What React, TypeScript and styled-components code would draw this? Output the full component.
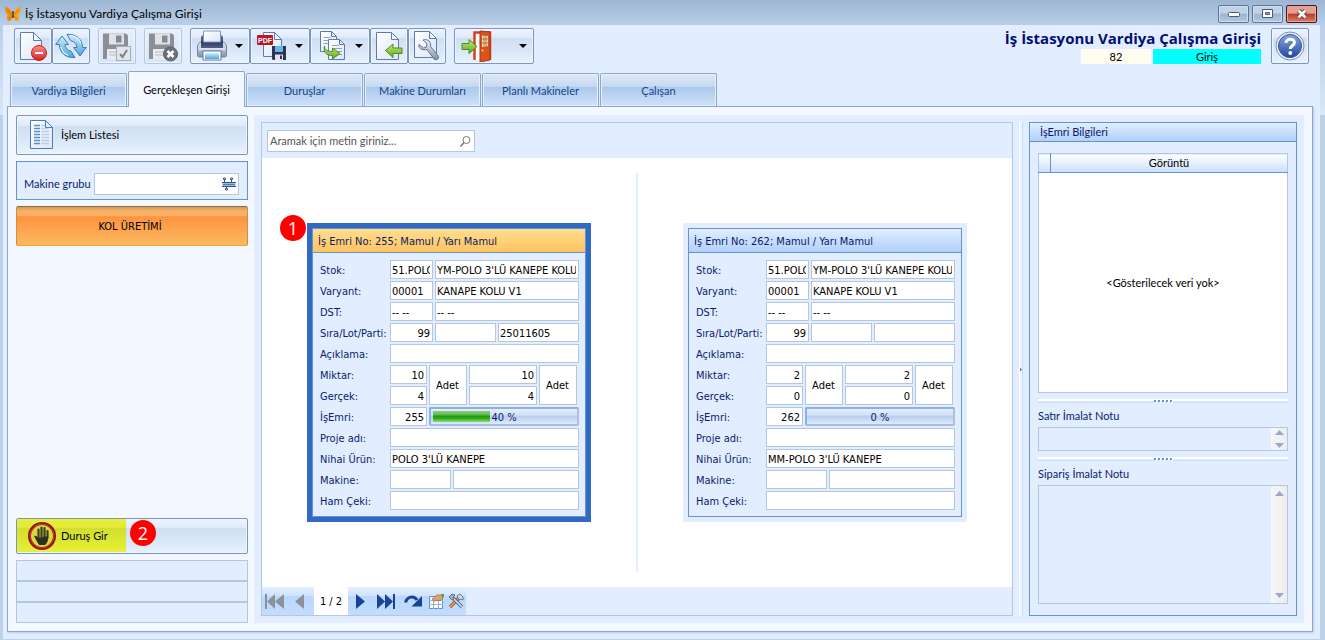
import React from "react";
import styled, { createGlobalStyle, css } from "styled-components";

const navy = "#0a1a6b";
const line = "#b3c7e3";
const panelBlue = "#6593cf";
const pale = "#e2eeff";
const valueFont = `"DejaVu Sans Condensed", "Noto Sans", sans-serif`;

const Global = createGlobalStyle`
  * { box-sizing: border-box; }
  body {
    margin: 0;
    font-family: Lato, "Noto Sans", sans-serif;
    font-size: 11px;
    line-height: 14px;
    color: #000;
  }
  button, input, textarea { font: inherit; color: inherit; margin: 0; }
`;

const Frame = styled.div`
  min-height: 100vh;
  display: flex;
  flex-direction: column;
  padding: 0 5px 1px 3px;
  background: linear-gradient(#9cb5d2 0, #b9cfe8 25px, #d9e7f6 115px, #bad2ea 115px);
`;

const TitleBar = styled.header`
  height: 25px;
  display: flex;
  align-items: center;
  gap: 4px;
  padding: 2px 3px 0 2px;
  font-size: 12px;
  line-height: 16px;
`;

const TitleText = styled.span`
  flex: 1;
`;

const WindowButtons = styled.div`
  display: flex;
  gap: 3px;
`;

const WindowButton = styled.button<{ $close?: boolean }>`
  width: 31px;
  height: 18px;
  padding: 0;
  display: flex;
  align-items: center;
  justify-content: center;
  border: 1px solid ${(p) => (p.$close ? "#4d1420" : "#5d7492")};
  border-radius: 2px;
  box-shadow: inset 0 0 0 1px ${(p) => (p.$close ? "#e3a79c" : "#cfdff0")};
  background: ${(p) =>
    p.$close
      ? "linear-gradient(#e3a093 0 45%, #bb3b22 50%, #d8806a)"
      : "linear-gradient(#bfd2e8 0 45%, #9bb4d2 50%, #b5cae2)"};
`;

const Client = styled.div`
  flex: 1;
  display: flex;
  flex-direction: column;
  background: ${pale};
  padding: 3px 7px 7px 4px;
`;

const Toolbar = styled.div`
  display: flex;
  align-items: flex-start;
  gap: 8px;
  height: 43px;
  padding: 0 4px 0 7px;
`;

const ToolGroup = styled.div`
  display: flex;
`;

const glossy = css`
  border: 1px solid #7a96bf;
  border-radius: 2px;
  box-shadow: inset 0 0 0 1px #eef5ff;
  background: linear-gradient(#edf4ff 0, #e0ebfa 25%, #cfdff2 28%, #d9e6f6 60%, #e9f2fe);
`;

const ToolButton = styled.button<{ $wide?: number }>`
  ${glossy}
  width: ${(p) => p.$wide ?? 38}px;
  height: 36px;
  padding: 0 6px 0 ${(p) => (p.$wide ? 5 : 2)}px;
  display: flex;
  align-items: center;
  justify-content: space-between;
  &:disabled {
    border-color: #b4c6de;
    background: linear-gradient(#e6f0fe, #d8e5f6);
  }
  svg { flex: none; }
`;

const Heading = styled.div`
  flex: 1;
  display: flex;
  flex-direction: column;
  align-items: flex-end;
  padding-right: 2px;
`;

const HeadingTitle = styled.h1`
  margin: 0;
  font: bold 15px/21px "Open Sans", "Noto Sans", sans-serif;
  color: #000f73;
`;

const StatusRow = styled.div`
  display: flex;
  gap: 2px;
  text-align: center;
  line-height: 15px;
`;

const StatusBox = styled.span<{ $cyan?: boolean }>`
  width: ${(p) => (p.$cyan ? 108 : 70)}px;
  height: 15px;
  background: ${(p) => (p.$cyan ? "#00ffff" : "#fffbef")};
`;

const Tabs = styled.div`
  display: flex;
  align-items: flex-end;
  gap: 1px;
  height: 35px;
  padding-left: 3px;
`;

const Tab = styled.button<{ $active?: boolean }>`
  width: 117px;
  height: 33px;
  padding: 1px 0 0;
  border: 1px solid #8ba6cf;
  border-bottom: 0;
  border-radius: 2px 2px 0 0;
  box-shadow: inset 0 0 0 1px #e6f0ff;
  background: linear-gradient(#dde8f6 0, #c8daf1 38%, #abc8ec 42%, #cfe2fb);
  color: #15428b;
  ${(p) =>
    p.$active &&
    css`
      height: 36px;
      margin-bottom: -1px;
      color: #000;
      background: #f3f7ff;
      box-shadow: none;
      z-index: 1;
    `}
`;

const Page = styled.main`
  flex: 1;
  display: flex;
  gap: 6px;
  padding: 8px;
  border: 1px solid #8ba6cf;
  box-shadow: 1px 1px 2px #b9cbe6;
  background: #f3f7ff;
`;

const Side = styled.aside`
  width: 232px;
  flex: none;
  display: flex;
  flex-direction: column;
  gap: 6px;
`;

const SideButton = styled.button<{ $orange?: boolean }>`
  ${glossy}
  height: 40px;
  padding: 0 9px;
  display: flex;
  align-items: center;
  gap: 3px;
  ${(p) =>
    p.$orange &&
    css`
      justify-content: center;
      padding: 2px 12px 0 8px;
      font-family: ${valueFont};
      border-color: #8e6b3e #c99143 #f5a81c;
      box-shadow: none;
      background: linear-gradient(#c99a60 0, #f9b062 10%, #fdb064 22%, #fc9440 26%, #fdb862);
    `}
`;

const StopWrap = styled.div`
  position: relative;
  margin-top: auto;
`;

const StopButton = styled.button`
  ${glossy}
  width: 100%;
  height: 36px;
  padding: 0;
  display: flex;
`;

const StopFace = styled.span`
  height: 33px;
  width: 109px;
  padding-left: 9px;
  display: flex;
  align-items: center;
  gap: 3px;
  background: linear-gradient(#e9f03a 0, #e3ea38 25%, #d2de2e 28%, #e8f036);
`;

const MachineGroup = styled.div`
  display: flex;
  align-items: center;
  height: 39px;
  padding: 6px 8px 0 7px;
  border: 1px solid ${panelBlue};
  background: ${pale};
  color: ${navy};
  label { width: 70px; }
`;

const IconField = styled.div<{ $w?: number }>`
  ${(p) => (p.$w ? css`width: ${p.$w}px;` : css`flex: 1;`)}
  min-width: 0;
  height: 22px;
  display: flex;
  align-items: center;
  padding: 0 2px;
  border: 1px solid ${line};
  background: #fff;
  input {
    flex: 1;
    min-width: 0;
    border: 0;
    outline: 0;
    padding: 0;
    background: none;
  }
  input::placeholder { color: #555; opacity: 1; }
`;

const SlotList = styled.div`
  border: 1px solid ${line};
  background: ${pale};
`;

const Slot = styled.div`
  height: 19px;
  & + & { border-top: 2px solid ${line}; height: 21px; }
`;

const Work = styled.div`
  flex: 1;
  min-width: 0;
  display: flex;
  gap: 6px;
  padding: 7px;
  background: ${pale};
`;

const ListPanel = styled.section`
  flex: 1;
  min-width: 0;
  display: flex;
  flex-direction: column;
  border: 1px solid ${line};
`;

const SearchStrip = styled.div`
  height: 35px;
  padding: 7px 5px;
`;

const Cards = styled.div`
  flex: 1;
  display: flex;
  padding: 15px 0;
  background: #fff;
`;

const CardCell = styled.div`
  flex: 1;
  display: flex;
  align-items: center;
  justify-content: center;
  & + & { border-left: 2px solid ${pale}; }
`;

const Card = styled.article<{ $selected?: boolean }>`
  position: relative;
  width: 284px;
  padding: 5px;
  font-family: ${valueFont};
  background: ${(p) => (p.$selected ? "#316ac5" : pale)};
`;

const CardFrame = styled.div`
  border: 1px solid ${panelBlue};
  background: ${pale};
  color: ${navy};
`;

const CardTitle = styled.h2<{ $selected?: boolean }>`
  margin: 0;
  height: 24px;
  padding: 0 5px;
  font-size: 11px;
  font-weight: normal;
  line-height: 25px;
  border-bottom: 1px solid ${panelBlue};
  background: ${(p) =>
    p.$selected ? "linear-gradient(#ffde8f, #ffc35e)" : "linear-gradient(#e2eeff, #b0d0fb)"};
`;

const CardBody = styled.div`
  display: flex;
  flex-direction: column;
  gap: 2px;
  padding: 7px 6px 6px 7px;
`;

const Row = styled.div`
  display: flex;
  gap: 2px;
`;

const RowLabel = styled.label`
  width: 68px;
  flex: none;
  line-height: 21px;
  height: 19px;
  white-space: nowrap;
`;

const Box = styled.input<{ $w?: number; $right?: boolean }>`
  ${(p) => (p.$w ? css`width: ${p.$w}px; flex: none;` : css`flex: 1;`)}
  min-width: 0;
  height: 19px;
  padding: 1px 2px 0 1px;
  border: 1px solid ${line};
  outline: 0;
  background: #fff;
  color: #000;
  font-family: ${valueFont};
  text-align: ${(p) => (p.$right ? "right" : "left")};
`;

const Quantities = styled.div`
  display: grid;
  grid-template-columns: 68px 37px 38px 68px 38px;
  grid-template-rows: 19px 19px;
  gap: 2px;
  ${Box} { width: auto; }
`;

const UnitBox = styled(Box)`
  grid-row: span 2;
  height: 40px;
  text-align: center;
`;

const Bar = styled.div`
  position: relative;
  flex: 1;
  height: 19px;
  padding: 2px;
  border: 2px solid #8fb0db;
  border-color: #8fb0db #a5c0e4 #a5c0e4 #8fb0db;
  border-radius: 2px;
  background: linear-gradient(#e3edfb 0, #d2e1f6 40%, #b8cfef 50%, #dfeafa);
`;

const BarFill = styled.div`
  height: 11px;
  background: linear-gradient(#8ccf7e 0, #5dbb4b 35%, #1d9c10 45%, #2ba51a 65%, #8fe06c);
`;

const BarText = styled.span`
  position: absolute;
  inset: 0;
  text-align: center;
  line-height: 17px;
`;

const Badge = styled.span<{ $x: number; $y: number }>`
  position: absolute;
  left: ${(p) => p.$x}px;
  top: ${(p) => p.$y}px;
  width: 26px;
  height: 26px;
  border-radius: 50%;
  background: #f00;
  color: #fff;
  font: 18px/26px "Open Sans", "Noto Sans", sans-serif;
  text-align: center;
`;

const Navigator = styled.nav`
  height: 28px;
  display: flex;
`;

const NavPart = styled.div<{ $plain?: boolean; $pad?: boolean }>`
  display: flex;
  align-items: center;
  padding-right: ${(p) => (p.$pad ? 2 : 0)}px;
  background: ${(p) =>
    p.$plain ? "#fff" : "linear-gradient(#e4effd 0, #cfe2ff 32%, #bbd7ff 34%, #c3dcff)"};
`;

const PageCount = styled.span`
  width: 34px;
  padding-top: 1px;
  text-align: center;
  font-family: ${valueFont};
`;

const NavButton = styled.button<{ $w: number }>`
  width: ${(p) => p.$w}px;
  height: 28px;
  padding: 0;
  border: 0;
  background: none;
  display: flex;
  align-items: center;
  justify-content: center;
`;

const SideSplitter = styled.div`
  width: 4px;
  display: flex;
  align-items: center;
  border-left: 1px solid #fff;
  border-right: 1px solid #c6dcfb;
  background: #edf4ff;
`;

const Info = styled.section`
  width: 268px;
  flex: none;
  display: flex;
  flex-direction: column;
  border: 1px solid ${panelBlue};
  color: ${navy};
`;

const InfoTitle = styled.h2`
  margin: 0;
  height: 19px;
  padding: 0 10px;
  font-size: 11px;
  font-weight: normal;
  line-height: 17px;
  border-bottom: 1px solid ${panelBlue};
  background: linear-gradient(#e2eeff, #b0d0fb);
`;

const InfoBody = styled.div`
  flex: 1;
  display: flex;
  flex-direction: column;
  padding: 11px 8px;
`;

const DataTable = styled.table`
  height: 240px;
  width: 100%;
  table-layout: fixed;
  border-collapse: collapse;
  border: 1px solid ${line};
  background: #fff;
  color: #000;
  th {
    height: 19px;
    padding: 0;
    font-weight: normal;
    color: #000;
    border-bottom: 1px solid ${panelBlue};
    background: linear-gradient(#fff, #c8dffd);
  }
  th:first-child { width: 12px; border-right: 1px solid ${panelBlue}; }
  td { text-align: center; padding: 0; }
`;

const Splitter = styled.div`
  height: 4px;
  margin: 6px 0;
  display: flex;
  justify-content: center;
  border-top: 2px solid #fff;
  border-bottom: 1px solid #c6dcfb;
  svg { margin-top: -1px; flex: none; }
`;

const NoteLabel = styled.label`
  line-height: 14px;
  padding-bottom: 4px;
`;

const Note = styled.div<{ $grow?: boolean }>`
  display: flex;
  ${(p) => (p.$grow ? css`flex: 1;` : css`height: 24px;`)}
  border: 1px solid ${line};
  textarea {
    flex: 1;
    min-width: 0;
    border: 0;
    outline: 0;
    padding: 2px;
    resize: none;
    background: none;
    overflow: hidden;
  }
`;

const ScrollTrack = styled.div<{ $grow?: boolean }>`
  width: 16px;
  display: flex;
  flex-direction: column;
  align-items: center;
  justify-content: space-between;
  padding: ${(p) => (p.$grow ? 5 : 2)}px 0;
  background: linear-gradient(to right, #f7f7f7, #ececec);
`;

/* ---------- icons ---------- */

const Caret = () => (
  <svg width="8" height="4" viewBox="0 0 8 4"><path d="M0 0h8L4 4z" fill="#000" /></svg>
);

const Grads = () => (
  <svg width="0" height="0" style={{ position: "absolute" }} aria-hidden="true">
    <defs>
      <linearGradient id="paper" x1="0" y1="0" x2="1" y2="1">
        <stop offset="0" stopColor="#fff" /><stop offset="1" stopColor="#dce6f5" />
      </linearGradient>
      <linearGradient id="green" x1="0" y1="0" x2="0" y2="1">
        <stop offset="0" stopColor="#c5e86c" /><stop offset="1" stopColor="#5faa28" />
      </linearGradient>
      <linearGradient id="red" x1="0" y1="0" x2="0" y2="1">
        <stop offset="0" stopColor="#ff8e8e" /><stop offset="1" stopColor="#e01c1c" />
      </linearGradient>
      <linearGradient id="sky" x1="0" y1="0" x2="0" y2="1">
        <stop offset="0" stopColor="#d2ecfb" /><stop offset="1" stopColor="#4fa3dc" />
      </linearGradient>
      <linearGradient id="steel" x1="0" y1="0" x2="0" y2="1">
        <stop offset="0" stopColor="#f4f7fb" /><stop offset="1" stopColor="#7d90ae" />
      </linearGradient>
      <linearGradient id="royal" x1="0" y1="0" x2="0" y2="1">
        <stop offset="0" stopColor="#86a9e2" /><stop offset="1" stopColor="#2347a0" />
      </linearGradient>
      <linearGradient id="dark" x1="0" y1="0" x2="0" y2="1">
        <stop offset="0" stopColor="#6f7a98" /><stop offset=".6" stopColor="#2f3c63" /><stop offset="1" stopColor="#54628a" />
      </linearGradient>
    </defs>
  </svg>
);

const Sheet = ({ x, y, w, h, f = 7 }: { x: number; y: number; w: number; h: number; f?: number }) => (
  <g stroke="#5f7bae" strokeLinejoin="round">
    <path d={`M${x} ${y}h${w - f}l${f} ${f}v${h - f}h${-w}z`} fill="url(#paper)" />
    <path d={`M${x + w - f} ${y}v${f}h${f}z`} fill="#f5f9ff" />
  </g>
);

const Icon = ({ children, size = 32 }: { children: React.ReactNode; size?: number }) => (
  <svg width={size} height={size} viewBox={`0 0 ${size} ${size}`} aria-hidden="true">{children}</svg>
);

const DeleteDoc = () => (
  <Icon>
    <Sheet x={3.5} y={2.5} w={21} h={27} f={8} />
    <circle cx="22" cy="23" r="7.5" fill="url(#red)" stroke="#c61a1a" />
    <rect x="17.5" y="21.5" width="9" height="3" rx=".5" fill="#fff" stroke="#c61a1a" strokeWidth=".5" />
  </Icon>
);

const Refresh = () => (
  <Icon>
    <g fill="url(#sky)" stroke="#3b7fb8" strokeLinejoin="round">
      <path d="M.7 14.500L7 6l6.500 8.500H10c.3 3.500 2.500 6 6 6.600l4 6.400C11 28.500 4.500 22.500 4.300 14.500z" />
      <path d="M31.300 17.500L25 26l-6.500-8.500H22c-.3-3.500-2.500-6-6-6.600L12 4.500C21 3.500 27.500 9.500 27.700 17.500z" />
    </g>
    <path d="M15 6c5-.5 9.500 2.500 10.800 7.500M6 17c.8 4 3.500 7 7.500 8.200" fill="none" stroke="#e9f7ff" strokeWidth="1.200" />
  </Icon>
);

const GrayFloppy = ({ cancel }: { cancel?: boolean }) => (
  <Icon>
    <path d="M2 3.500h23l2 2V29H2z" fill="#8b8e94" />
    <path d="M8 3.500h15v11H8z" fill="#dfe2e7" />
    <path d="M15 5.500h5.500v7H15z" fill="#858990" />
    <path d="M6 19h17v10H6z" fill="#e9ecf0" />
    <path d="M8 22h12M8 25h12" stroke="#b9bdc4" />
    {cancel ? (
      <>
        <circle cx="23.500" cy="24" r="7" fill="#6e7278" stroke="#5d6167" />
        <path d="M20.500 21l6 6m0-6l-6 6" stroke="#fff" strokeWidth="2.500" />
      </>
    ) : (
      <>
        <rect x="15.500" y="16.500" width="14" height="14" fill="#e2e5e9" stroke="#a7abb2" />
        <path d="M19 24l2.500 3 4.500-7" fill="none" stroke="#7e838a" strokeWidth="2" />
      </>
    )}
  </Icon>
);

const Printer = () => (
  <Icon>
    <path d="M3 13l4-2h18l4 2 1.500 3v9.500c0 1-1 1.500-2 1.500H3.500c-1 0-2-.5-2-1.500V16z" fill="url(#steel)" stroke="#7587a8" />
    <path d="M5 8c0-2 1-3 3-3h16c2 0 3 1 3 3v10H5z" fill="url(#dark)" />
    <path d="M7.500 1h17v11h-17z" fill="url(#paper)" stroke="#8496ba" />
    <path d="M3 19h26" stroke="#fff" />
    <path d="M7 21h18v9H7z" fill="#fff" stroke="#5d78aa" />
    <path d="M9 23h14v6H9z" fill="url(#sky)" />
  </Icon>
);

const PdfSave = () => (
  <Icon>
    <Sheet x={7.500} y={2.500} w={18} h={24} />
    <rect x="1" y="5" width="16" height="10" rx="1" fill="#b8182a" />
    <text x="2" y="12.500" fontSize="7" fontWeight="bold" fontFamily="Liberation Sans, sans-serif" fill="#fff">PDF</text>
    <path d="M16 16h14v14H17l-1-1z" fill="#2b3550" />
    <path d="M19 16h8v6h-8z" fill="#6cb4e4" />
    <path d="M19 24.500h8V30h-8z" fill="#dfe5ee" />
    <path d="M24 25.500h2v3.500h-2z" fill="#2b3550" />
  </Icon>
);

const CopyPages = () => (
  <Icon>
    <Sheet x={4.500} y={1.500} w={16} h={20} f={5} />
    <path d="M7.500 7.500h7M7.500 10.500h6M7.500 13.500h6" stroke="#8fa3c8" />
    <Sheet x={12.500} y={9.500} w={16} h={20} f={5} />
    <path d="M16 15.500h7M16 18.500h10M16 21.500h10M16 24.500h10" stroke="#8fa3c8" />
    <path d="M8.500 16c0 4 3 5.500 8 5.500V18l7.500 5.500-7.500 5.500v-3.500C10 25.500 7 22 8.500 16z" fill="url(#green)" stroke="#4b8b26" />
  </Icon>
);

const BackPage = () => (
  <Icon>
    <Sheet x={3.500} y={2.500} w={22} h={27} f={7} />
    <path d="M12.500 20.500l7.500-6.500v4h9v5.500h-9v4z" fill="url(#green)" stroke="#4b8b26" strokeLinejoin="round" />
  </Icon>
);

const WrenchPage = () => (
  <Icon>
    <Sheet x={3.500} y={1.500} w={22} h={26} f={7} />
    <path d="M8 14.500l4.500 3.500 3-1 .5-3.500-4-3.500c5-1.500 8.500 2 7.500 6.500l7.500 9c2 3-1.500 5.500-4 3.500l-7-9.500C11 20.500 7 18.500 8 14.500z" fill="url(#steel)" stroke="#63728f" strokeLinejoin="round" />
  </Icon>
);

const ExitDoor = () => (
  <Icon>
    <path d="M14.500 30V2.500H30V30" fill="#f8fbff" stroke="#d1441c" strokeWidth="2.500" />
    <path d="M20 1l10 1v28l-10 2z" fill="#d9531f" stroke="#a9380f" />
    <path d="M22 5.500l6 .5v10l-6 1z" fill="#f3e4c4" />
    <path d="M24 5.500v11M26 5.500v11M22 9h6M22 13h6" stroke="#a55a2e" strokeWidth=".8" />
    <circle cx="22.500" cy="20.500" r="1" fill="#ffd970" />
    <path d="M2 13.500h7v-4l8 7-8 7v-4H2z" fill="url(#green)" stroke="#4b8b26" strokeLinejoin="round" />
  </Icon>
);

const Help = () => (
  <Icon>
    <circle cx="16" cy="16" r="14" fill="#e9eef7" stroke="#7d91b5" />
    <circle cx="16" cy="16" r="11.500" fill="url(#royal)" stroke="#34539c" />
    <path d="M12 13c0-5 8.500-5 8.500-.5 0 3-4.200 3-4.200 6.500" fill="none" stroke="#fff" strokeWidth="3" />
    <circle cx="16.300" cy="23" r="1.900" fill="#fff" />
  </Icon>
);

const Butterfly = () => (
  <svg width="16" height="16" viewBox="0 0 16 16" aria-hidden="true">
    <path d="M7.500 8.500C7 5 4 1 .3.500c-.5 4 .2 7.500 2.700 8.500-1.500 1.500-1.200 4.500.3 6 2.700.5 4-2 4.500-5z" fill="#f08c12" />
    <path d="M8.500 8.500C9 5 12 1 15.700.500c.5 4-.2 7.500-2.700 8.500 1.500 1.500 1.200 4.500-.3 6-2.700.5-4-2-4.500-5z" fill="#f6a21e" />
    <path d="M2 3l4 5M14 3l-4 5M4 13l3-3M12 13l-3-3" fill="none" stroke="#b5640f" strokeWidth=".6" />
    <path d="M8 5v7" stroke="#4a2a10" strokeWidth="1.400" />
  </svg>
);

const ListDoc = () => (
  <Icon>
    <g transform="translate(1 0)">
      <path d="M3.500 1.500h15l7 7v21h-22z" fill="url(#paper)" stroke="#4a7db5" />
      <path d="M18.500 1.500v7h7z" fill="#e7f1fb" stroke="#4a7db5" />
      <path d="M7 6.500h6M7 9.500h6M7 12.500h6M7 15.500h6M7 18.500h6M7 21.500h6M7 24.500h6" stroke="#5c8fc4" strokeWidth="1.500" />
      <path d="M14.500 6.500h3M14.500 9.500h8M14.500 12.500h8M14.500 15.500h8M14.500 18.500h8M14.500 21.500h8M14.500 24.500h8" stroke="#8aaed6" strokeWidth="1.500" strokeDasharray="1 1" />
    </g>
  </Icon>
);

const StopHand = () => (
  <Icon>
    <circle cx="16" cy="16" r="12.500" fill="#d8d840" stroke="#8d1410" strokeWidth="3" />
    <circle cx="16" cy="16" r="12" fill="none" stroke="#d9483a" strokeWidth=".8" />
    <path d="M12.500 18V9.500M15.500 17V7.500M18.500 17V8M21.500 18v-7" stroke="#3b3d24" strokeWidth="2.200" strokeLinecap="round" />
    <path d="M8 16c2-.8 3.500 1 4 2l9.500-2c1.500 3 0 7-2.500 9h-5.500c-2-1.500-3-5-5.500-9z" fill="#2e301f" />
  </Icon>
);

const MachineIcon = () => (
  <svg width="14" height="14" viewBox="0 0 14 14" aria-hidden="true">
    <path d="M2.500 2v4M9.500 2v4M4.500 9v3" stroke="#4b5568" />
    <path d="M1.500 1h2v1.500h-2zM8.500 1h2v1.500h-2zM3.500 11.500h2V13h-2z" fill="#fff" stroke="#4b5568" />
    <path d="M.5 5.500h13v4H.5z" fill="#8fc0ea" />
    <path d="M0 5.500h14M0 9.500h14" stroke="#33527f" />
    <path d="M1 7.500h12" stroke="#3f7ec0" />
  </svg>
);

const SearchIcon = () => (
  <svg width="13" height="13" viewBox="0 0 13 13" aria-hidden="true">
    <circle cx="7.500" cy="5" r="3.500" fill="#fff" stroke="#777" />
    <path d="M5 7.500L1.500 11.500" stroke="#777" strokeWidth="1.500" />
  </svg>
);

const First = () => (
  <svg width="19" height="15" viewBox="0 0 19 15"><path d="M0 0h2v15H0zM10 0v15L2 7.500zM19 0v15l-9-7.500z" fill="#8d9199" /></svg>
);
const Prev = () => (
  <svg width="9" height="15" viewBox="0 0 9 15"><path d="M9 0v15L0 7.500z" fill="#8d9199" /></svg>
);
const Next = () => (
  <svg width="9" height="15" viewBox="0 0 9 15"><path d="M0 0v15l9-7.500z" fill="#17458f" /></svg>
);
const Last = () => (
  <svg width="18" height="15" viewBox="0 0 18 15"><path d="M16 0h2v15h-2zM8 0v15l8-7.500zM0 0v15l8-7.500z" fill="#17458f" /></svg>
);
const Redo = () => (
  <svg width="18" height="14" viewBox="0 0 18 14">
    <path d="M1.500 8.500C3 2.500 10 1 13 6" fill="none" stroke="#17458f" strokeWidth="3" />
    <path d="M18 2v10.500H7.500z" fill="#17458f" />
  </svg>
);
const EditGrid = () => (
  <svg width="16" height="16" viewBox="0 0 16 16">
    <path d="M1.500 3.500h13v12h-13z" fill="#fff" stroke="#5b8fd0" />
    <path d="M1 7.500h14M1 11.500h14M5.500 7v9M10.500 7v9" stroke="#8db5e6" />
    <path d="M4 6l5-4h5l1.500 1.500-3 4H8l-2 1z" fill="#e0a070" stroke="#a8693a" strokeWidth=".7" />
    <path d="M13 1h3v3h-2z" fill="#4fa83d" />
  </svg>
);
const Tools = () => (
  <svg width="16" height="16" viewBox="0 0 16 16">
    <path d="M2 14L11 5" stroke="#a0521d" strokeWidth="3.200" />
    <path d="M2 14L11 5" stroke="#f0a352" strokeWidth="1.600" />
    <path d="M5 5l9 9" stroke="#4d6077" strokeWidth="3.200" />
    <path d="M5 5l9 9" stroke="#dbe5f0" strokeWidth="1.600" />
    <path d="M1 4l3-3 3 1-2 2 1 2-2 1z" fill="#9fb2c8" stroke="#4d6077" strokeWidth=".8" />
    <path d="M9 3l3-2 3 3v3l-2-1-2 1z" fill="#cfdae6" stroke="#4d6077" strokeWidth=".8" />
  </svg>
);
const ScrollTri = ({ down }: { down?: boolean }) => (
  <svg width="9" height="5" viewBox="0 0 9 5"><path d={down ? "M0 0h9L4.500 5z" : "M0 5h9L4.500 0z"} fill="#9ba7cb" /></svg>
);
const Grip = () => (
  <svg width="19" height="3" viewBox="0 0 19 3">
    {[0, 4, 8, 12, 16].map((x) => (
      <g key={x}>
        <path d={`M${x + 1} 1h2v2h-2z`} fill="#fff" />
        <path d={`M${x} 0h2v2h-2z`} fill="#6593cf" />
      </g>
    ))}
  </svg>
);

/* ---------- work order cards ---------- */

type Order = {
  id: string;
  selected?: boolean;
  lot: string;
  amount: string;
  done: string;
  percent: number;
  product: string;
};

const orders: Order[] = [
  { id: "255", selected: true, lot: "25011605", amount: "10", done: "4", percent: 40, product: "POLO 3'LÜ KANEPE" },
  { id: "262", lot: "", amount: "2", done: "0", percent: 0, product: "MM-POLO 3'LÜ KANEPE" },
];

type FieldSpec = { v?: string; w?: number; right?: boolean };

const Line = ({ id, label, fields }: { id: string; label: string; fields: FieldSpec[] }) => (
  <Row>
    <RowLabel htmlFor={id}>{label}</RowLabel>
    {fields.map((f, i) => (
      <Box
        key={i}
        id={i === 0 ? id : undefined}
        aria-label={i ? `${label} ${i + 1}` : undefined}
        readOnly
        value={f.v ?? ""}
        $w={f.w}
        $right={f.right}
      />
    ))}
  </Row>
);

const OrderCard = ({ o }: { o: Order }) => (
  <Card $selected={o.selected}>
    {o.selected && <Badge $x={-27} $y={-8}>1</Badge>}
    <CardFrame>
      <CardTitle $selected={o.selected}>İş Emri No: {o.id}; Mamul / Yarı Mamul</CardTitle>
      <CardBody>
        <Line id={`stok${o.id}`} label="Stok:" fields={[{ v: "51.POLO", w: 43 }, { v: "YM-POLO 3'LÜ KANEPE KOLU" }]} />
        <Line id={`var${o.id}`} label="Varyant:" fields={[{ v: "00001", w: 43 }, { v: "KANAPE KOLU V1" }]} />
        <Line id={`dst${o.id}`} label="DST:" fields={[{ v: "-- --", w: 43 }, { v: "-- --" }]} />
        <Line id={`lot${o.id}`} label="Sıra/Lot/Parti:" fields={[{ v: "99", w: 43, right: true }, { w: 61 }, { v: o.lot }]} />
        <Line id={`acik${o.id}`} label="Açıklama:" fields={[{}]} />
        <Quantities>
          <RowLabel htmlFor={`mik${o.id}`}>Miktar:</RowLabel>
          <Box id={`mik${o.id}`} readOnly value={o.amount} $right />
          <UnitBox aria-label="Birim" readOnly value="Adet" />
          <Box aria-label="Miktar 2" readOnly value={o.amount} $right />
          <UnitBox aria-label="Birim 2" readOnly value="Adet" />
          <RowLabel htmlFor={`ger${o.id}`}>Gerçek:</RowLabel>
          <Box id={`ger${o.id}`} readOnly value={o.done} $right />
          <Box aria-label="Gerçek 2" readOnly value={o.done} $right />
        </Quantities>
        <Row>
          <RowLabel htmlFor={`emri${o.id}`}>İşEmri:</RowLabel>
          <Box id={`emri${o.id}`} readOnly value={o.id} $w={37} $right />
          <Bar role="progressbar" aria-label="İşEmri" aria-valuenow={o.percent} aria-valuemin={0} aria-valuemax={100}>
            <BarFill style={{ width: `${o.percent}%` }} />
            <BarText>{o.percent} %</BarText>
          </Bar>
        </Row>
        <Line id={`proje${o.id}`} label="Proje adı:" fields={[{}]} />
        <Line id={`urun${o.id}`} label="Nihai Ürün:" fields={[{ v: o.product }]} />
        <Line id={`mak${o.id}`} label="Makine:" fields={[{ w: 61 }, {}]} />
        <Line id={`ham${o.id}`} label="Ham Çeki:" fields={[{}]} />
      </CardBody>
    </CardFrame>
  </Card>
);

const tabs = ["Vardiya Bilgileri", "Gerçekleşen Girişi", "Duruşlar", "Makine Durumları", "Planlı Makineler", "Çalışan"];

export default function App() {
  return (
    <Frame>
      <Global />
      <Grads />
      <TitleBar>
        <Butterfly />
        <TitleText>İş İstasyonu Vardiya Çalışma Girişi</TitleText>
        <WindowButtons>
          <WindowButton aria-label="Simge durumuna küçült">
            <svg width="12" height="6" viewBox="0 0 12 6"><rect x=".5" y="1.500" width="11" height="4" rx="1" fill="#fff" stroke="#4c586b" /></svg>
          </WindowButton>
          <WindowButton aria-label="Ekranı kapla">
            <svg width="11" height="9" viewBox="0 0 11 9"><path d="M.5.5h10v8H.5z" fill="#fff" stroke="#4c586b" /><path d="M3.500 3.500h4v2h-4z" fill="#9bb4d2" stroke="#4c586b" /></svg>
          </WindowButton>
          <WindowButton $close aria-label="Kapat">
            <svg width="12" height="10" viewBox="0 0 12 10"><path d="M2.500 1.500l7 7m0-7l-7 7" stroke="#4c3a44" strokeWidth="4.500" /><path d="M2.500 1.500l7 7m0-7l-7 7" stroke="#fff" strokeWidth="2.800" /></svg>
          </WindowButton>
        </WindowButtons>
      </TitleBar>
      <Client>
        <Toolbar>
          <ToolGroup>
            <ToolButton aria-label="Sil"><DeleteDoc /></ToolButton>
            <ToolButton aria-label="Yenile"><Refresh /></ToolButton>
          </ToolGroup>
          <ToolButton disabled aria-label="Kaydet"><GrayFloppy /></ToolButton>
          <ToolButton disabled aria-label="Vazgeç"><GrayFloppy cancel /></ToolButton>
          <ToolGroup>
            <ToolButton $wide={60} aria-label="Yazdır"><Printer /><Caret /></ToolButton>
            <ToolButton $wide={60} aria-label="PDF kaydet"><PdfSave /><Caret /></ToolButton>
            <ToolButton $wide={60} aria-label="Kopyala"><CopyPages /><Caret /></ToolButton>
            <ToolButton aria-label="Geri"><BackPage /></ToolButton>
            <ToolButton aria-label="Ayarlar"><WrenchPage /></ToolButton>
          </ToolGroup>
          <ToolButton $wide={80} aria-label="Çıkış"><ExitDoor /><Caret /></ToolButton>
          <Heading>
            <HeadingTitle>İş İstasyonu Vardiya Çalışma Girişi</HeadingTitle>
            <StatusRow>
              <StatusBox>82</StatusBox>
              <StatusBox $cyan>Giriş</StatusBox>
            </StatusRow>
          </Heading>
          <ToolButton aria-label="Yardım"><Help /></ToolButton>
        </Toolbar>
        <Tabs role="tablist">
          {tabs.map((t, i) => (
            <Tab key={t} role="tab" aria-selected={i === 1} $active={i === 1}>{t}</Tab>
          ))}
        </Tabs>
        <Page>
          <Side>
            <SideButton><ListDoc />İşlem Listesi</SideButton>
            <MachineGroup>
              <label htmlFor="machineGroup">Makine grubu</label>
              <IconField><input id="machineGroup" /><MachineIcon /></IconField>
            </MachineGroup>
            <SideButton $orange>KOL ÜRETİMİ</SideButton>
            <StopWrap>
              <StopButton><StopFace><StopHand />Duruş Gir</StopFace></StopButton>
              <Badge $x={114} $y={2}>2</Badge>
            </StopWrap>
            <SlotList><Slot /><Slot /><Slot /></SlotList>
          </Side>
          <Work>
            <ListPanel>
              <SearchStrip>
                <IconField $w={208}>
                  <input aria-label="Ara" placeholder="Aramak için metin giriniz..." />
                  <SearchIcon />
                </IconField>
              </SearchStrip>
              <Cards>
                {orders.map((o) => (
                  <CardCell key={o.id}><OrderCard o={o} /></CardCell>
                ))}
              </Cards>
              <Navigator>
                <NavPart $pad>
                  <NavButton $w={25} aria-label="İlk"><First /></NavButton>
                  <NavButton $w={25} aria-label="Önceki"><Prev /></NavButton>
                </NavPart>
                <NavPart $plain><PageCount>1 / 2</PageCount></NavPart>
                <NavPart>
                  <NavButton $w={25} aria-label="Sonraki"><Next /></NavButton>
                  <NavButton $w={26} aria-label="Son"><Last /></NavButton>
                  <NavButton $w={27} aria-label="Yinele"><Redo /></NavButton>
                  <NavButton $w={20} aria-label="Düzenle"><EditGrid /></NavButton>
                  <NavButton $w={20} aria-label="Araçlar"><Tools /></NavButton>
                </NavPart>
              </Navigator>
            </ListPanel>
            <SideSplitter>
              <svg width="3" height="5" viewBox="0 0 3 5"><path d="M0 0l3 2.500L0 5z" fill="#3f73b8" /></svg>
            </SideSplitter>
            <Info>
              <InfoTitle>İşEmri Bilgileri</InfoTitle>
              <InfoBody>
                <DataTable>
                  <thead><tr><th></th><th>Görüntü</th></tr></thead>
                  <tbody><tr><td colSpan={2}>&lt;Gösterilecek veri yok&gt;</td></tr></tbody>
                </DataTable>
                <Splitter><Grip /></Splitter>
                <NoteLabel htmlFor="lineNote">Satır İmalat Notu</NoteLabel>
                <Note>
                  <textarea id="lineNote" />
                  <ScrollTrack><ScrollTri /><ScrollTri down /></ScrollTrack>
                </Note>
                <Splitter><Grip /></Splitter>
                <NoteLabel htmlFor="orderNote">Sipariş İmalat Notu</NoteLabel>
                <Note $grow>
                  <textarea id="orderNote" />
                  <ScrollTrack $grow><ScrollTri /><ScrollTri down /></ScrollTrack>
                </Note>
              </InfoBody>
            </Info>
          </Work>
        </Page>
      </Client>
    </Frame>
  );
}
